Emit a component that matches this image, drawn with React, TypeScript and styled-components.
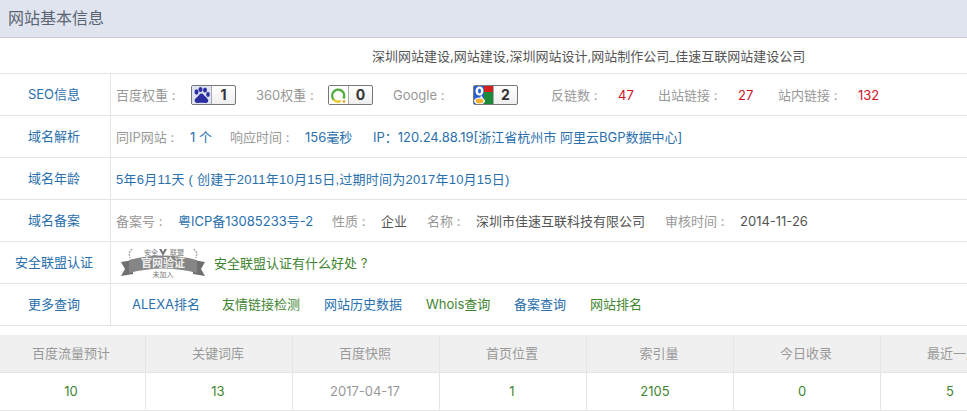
import type { ReactNode } from 'react';
import styled, { createGlobalStyle } from 'styled-components';

const GlobalStyle = createGlobalStyle`
  html, body {
    margin: 0;
    padding: 0;
    background: #fff;
    overflow: hidden;
  }
  body {
    font-family: Inter, "Noto Sans CJK SC", sans-serif;
    font-size: 13px;
  }
`;

const COLOR = {
  blue: '#2a70ad',
  green: '#3f8531',
  red: '#d0121f',
  gray: '#999',
  dark: '#555',
};

const App = () => {
  return (
    <Page>
      <GlobalStyle />
      <Header>网站基本信息</Header>
      <TitleRow>深圳网站建设,网站建设,深圳网站设计,网站制作公司_佳速互联网站建设公司</TitleRow>

      <Row>
        <RowLabel>SEO信息</RowLabel>
        <RowBody>
          <Text $w={75}>百度权重 :</Text>
          <RankBadge $right={20} icon={<BaiduIcon />} value="1" />
          <Text $w={72}>360权重 :</Text>
          <RankBadge $right={20} icon={<QihooIcon />} value="0" />
          <Text $w={80}>Google :</Text>
          <RankBadge $right={33} icon={<GoogleIcon />} value="2" />
          <Text $w={67}>反链数 :</Text>
          <Text $w={40} $color={COLOR.red}>47</Text>
          <Text $w={80}>出站链接 :</Text>
          <Text $w={40} $color={COLOR.red}>27</Text>
          <Text $w={80}>站内链接 :</Text>
          <Text $color={COLOR.red}>132</Text>
        </RowBody>
      </Row>

      <Row>
        <RowLabel>域名解析</RowLabel>
        <RowBody>
          <Text $w={74}>同IP网站 :</Text>
          <Text $w={40} $color={COLOR.blue}>1 个</Text>
          <Text $w={75}>响应时间 :</Text>
          <Text $w={68} $color={COLOR.blue}>156毫秒</Text>
          <Text $color={COLOR.blue}>IP：120.24.88.19[浙江省杭州市 阿里云BGP数据中心]</Text>
        </RowBody>
      </Row>

      <Row>
        <RowLabel>域名年龄</RowLabel>
        <RowBody>
          <AgeText>5年6月11天 ( 创建于2011年10月15日,过期时间为2017年10月15日)</AgeText>
        </RowBody>
      </Row>

      <Row>
        <RowLabel>域名备案</RowLabel>
        <RowBody>
          <Text $w={62}>备案号 :</Text>
          <Text $w={154} $color={COLOR.blue}>粤ICP备13085233号-2</Text>
          <Text $w={49}>性质 :</Text>
          <Text $w={46} $color={COLOR.dark}>企业</Text>
          <Text $w={49}>名称 :</Text>
          <Text $w={189} $color={COLOR.dark}>深圳市佳速互联科技有限公司</Text>
          <Text $w={75}>审核时间 :</Text>
          <Text $color={COLOR.dark}>2014-11-26</Text>
        </RowBody>
      </Row>

      <Row>
        <RowLabel>安全联盟认证</RowLabel>
        <RowBody>
          <CertBadge />
          <Text $color={COLOR.green}>安全联盟认证有什么好处 ?</Text>
        </RowBody>
      </Row>

      <Row>
        <RowLabel>更多查询</RowLabel>
        <LinksBody>
          <Text $w={90} $color={COLOR.blue}>ALEXA排名</Text>
          <Text $w={102} $color={COLOR.green}>友情链接检测</Text>
          <Text $w={102} $color={COLOR.blue}>网站历史数据</Text>
          <Text $w={88} $color={COLOR.green}>Whois查询</Text>
          <Text $w={76} $color={COLOR.blue}>备案查询</Text>
          <Text $color={COLOR.green}>网站排名</Text>
        </LinksBody>
      </Row>

      <Stats>
        {stats.map((stat) => (
          <StatHead key={stat.title}>{stat.title}</StatHead>
        ))}
        {stats.map((stat) => (
          <StatValue key={stat.title} $muted={stat.muted} $shift={stat.shift}>
            {stat.value}
          </StatValue>
        ))}
      </Stats>
    </Page>
  );
};

export default App;

const stats = [
  { title: '百度流量预计', value: '10' },
  { title: '关键词库', value: '13' },
  { title: '百度快照', value: '2017-04-17', muted: true },
  { title: '首页位置', value: '1' },
  { title: '索引量', value: '2105', shift: 10 },
  { title: '今日收录', value: '0', shift: 10 },
  { title: '最近一周', value: '5', shift: 8 },
];

const RankBadge = ({
  icon,
  value,
  $right,
}: {
  icon: ReactNode;
  value: string;
  $right: number;
}) => (
  <Badge $right={$right}>
    <BadgeIcon>{icon}</BadgeIcon>
    <BadgeValue>{value}</BadgeValue>
  </Badge>
);

const BaiduIcon = () => (
  <svg width="19" height="19" viewBox="0 0 19 19">
    <rect width="19" height="19" fill="#dfe3f2" />
    <g fill="#2b2f9f">
      <ellipse cx="4.500" cy="6" rx="2" ry="2.700" />
      <ellipse cx="8.500" cy="3.500" rx="2" ry="2.600" />
      <ellipse cx="13" cy="4" rx="2" ry="2.600" />
      <ellipse cx="16" cy="8.500" rx="1.800" ry="2.400" />
      <path d="M9.500 7.500c-2 0-2.600 2-4 3.200C4 12 2 13.500 3 15.700c1 1.800 4 1 6.500 1s5.500.8 6.500-1c.9-2.200-1-3.800-2.500-5-1.400-1.200-2-3.200-4-3.200z" />
    </g>
  </svg>
);

const QihooIcon = () => (
  <svg width="19" height="19" viewBox="0 0 19 19">
    <rect width="19" height="19" fill="#fff" />
    <path d="M14.500 12.500a6 6 0 1 0-9.800 1.200" fill="none" stroke="#4fae3c" strokeWidth="2.400" />
    <path d="M4.700 13.700a6 6 0 0 0 7 1.200" fill="none" stroke="#e8c92e" strokeWidth="2.400" />
    <circle cx="15" cy="15.500" r="1.400" fill="#e8a92e" />
  </svg>
);

const GoogleIcon = () => (
  <svg width="19" height="19" viewBox="0 0 19 19">
    <rect width="19" height="19" fill="#1c8a3a" />
    <rect width="10" height="11" fill="#2a5fd0" />
    <rect x="10" width="9" height="6" fill="#d5201c" />
    <rect y="11" width="10" height="8" fill="#2a5fd0" />
    <ellipse cx="5.500" cy="5" rx="4" ry="4.500" fill="#fff" />
    <ellipse cx="5.500" cy="5" rx="1.500" ry="2.500" fill="#2a5fd0" />
    <path d="M7 9l2 3-3 1z" fill="#fff" />
    <ellipse cx="5.500" cy="15" rx="5.500" ry="3.500" fill="#fff" />
    <ellipse cx="5.500" cy="15" rx="4" ry="2.400" fill="#f2b233" />
  </svg>
);

const CertBadge = () => (
  <CertWrap>
    <svg width="84" height="30" viewBox="0 0 84 30">
      <path d="M0 14l12-2v14l-12 2 4-7z" fill="#6f6f6f" />
      <path d="M84 14l-12-2v14l12 2-4-7z" fill="#6f6f6f" />
      <path d="M8 12q34-9 68 0v13q-34-9-68 0z" fill="#858585" />
      <path d="M38 1h2.500l1.500 3 1.500-3H46l-4 7z" fill="#777" />
      <path d="M11 1l-3 4 1 5M73 1l3 4-1 5" fill="none" stroke="#aaa" strokeWidth="1.500" strokeDasharray="2 1" />
      <CertSmall x="23" y="7">安全</CertSmall>
      <CertSmall x="49" y="7">联盟</CertSmall>
      <CertMain x="42" y="19" textAnchor="middle">官网验证</CertMain>
      <CertSmall x="42" y="29" textAnchor="middle">未加入</CertSmall>
    </svg>
  </CertWrap>
);

const CertSmall = styled.text`
  font-size: 7px;
  fill: #777;
  font-family: "Noto Sans CJK SC", sans-serif;
`;
const CertMain = styled.text`
  font-size: 11px;
  font-weight: 700;
  fill: #eee;
  font-family: "Noto Sans CJK SC", sans-serif;
`;
const CertWrap = styled.div`
  width: 84px;
  height: 30px;
  margin: 0 9px 0 5px;
  flex: none;
`;
const Page = styled.div`
  width: 967px;
  height: 411px;
  overflow: hidden;
`;
const Header = styled.div`
  height: 37px;
  line-height: 37px;
  padding-left: 8px;
  background: #e0e4ee;
  border-bottom: 1px solid #c9ccd3;
  color: #5a6472;
  font-size: 16px;
`;
const TitleRow = styled.div`
  height: 35px;
  line-height: 36px;
  padding-left: 372px;
  border-bottom: 1px solid #e4e4e4;
  color: ${COLOR.dark};
`;
const Row = styled.div`
  display: flex;
  height: 41px;
  border-bottom: 1px solid #e4e4e4;
`;
const RowLabel = styled.div`
  width: 108px;
  flex: none;
  display: flex;
  align-items: center;
  justify-content: center;
  border-right: 1px solid #e4e4e4;
  padding: 0 2px 2px 0;
  color: ${COLOR.blue};
`;
const RowBody = styled.div`
  display: flex;
  align-items: center;
  padding-left: 5px;
  white-space: nowrap;
`;
const LinksBody = styled(RowBody)`
  padding: 0 0 2px 21px;
`;
const Text = styled.span<{ $w?: number; $color?: string }>`
  flex: none;
  width: ${({ $w }) => ($w ? `${$w}px` : 'auto')};
  color: ${({ $color }) => $color ?? COLOR.gray};
`;
const AgeText = styled.span`
  font-family: "Liberation Sans", "Noto Sans CJK SC", sans-serif;
  letter-spacing: 0.25px;
  color: ${COLOR.blue};
`;
const Badge = styled.div<{ $right: number }>`
  display: flex;
  width: 45px;
  height: 20px;
  box-sizing: border-box;
  flex: none;
  margin-right: ${({ $right }) => $right}px;
  border: 1px solid #777;
  border-radius: 2px;
  background: linear-gradient(#fff, #eee);
`;
const BadgeIcon = styled.div`
  width: 19px;
  height: 18px;
  overflow: hidden;
  border-right: 1px solid #aaa;
`;
const BadgeValue = styled.div`
  flex: 1;
  text-align: center;
  line-height: 18px;
  font-size: 14px;
  font-weight: 700;
  color: #333;
`;
const Stats = styled.div`
  display: grid;
  grid-template-columns: repeat(7, 147px);
  margin-top: 9px;
  margin-left: -1px;
`;
const StatHead = styled.div`
  height: 37px;
  line-height: 37px;
  text-align: center;
  padding-right: 2px;
  background: #f0f0f0;
  border-right: 1px solid #e6e6e6;
  border-bottom: 1px solid #e4e4e4;
  color: ${COLOR.gray};
  white-space: nowrap;
`;
const StatValue = styled.div<{ $muted?: boolean; $shift?: number }>`
  height: 37px;
  line-height: 37px;
  text-align: center;
  padding-right: ${({ $shift }) => $shift ?? 2}px;
  border-right: 1px solid #e6e6e6;
  border-bottom: 1px solid #e4e4e4;
  color: ${({ $muted }) => ($muted ? COLOR.gray : COLOR.green)};
`;
